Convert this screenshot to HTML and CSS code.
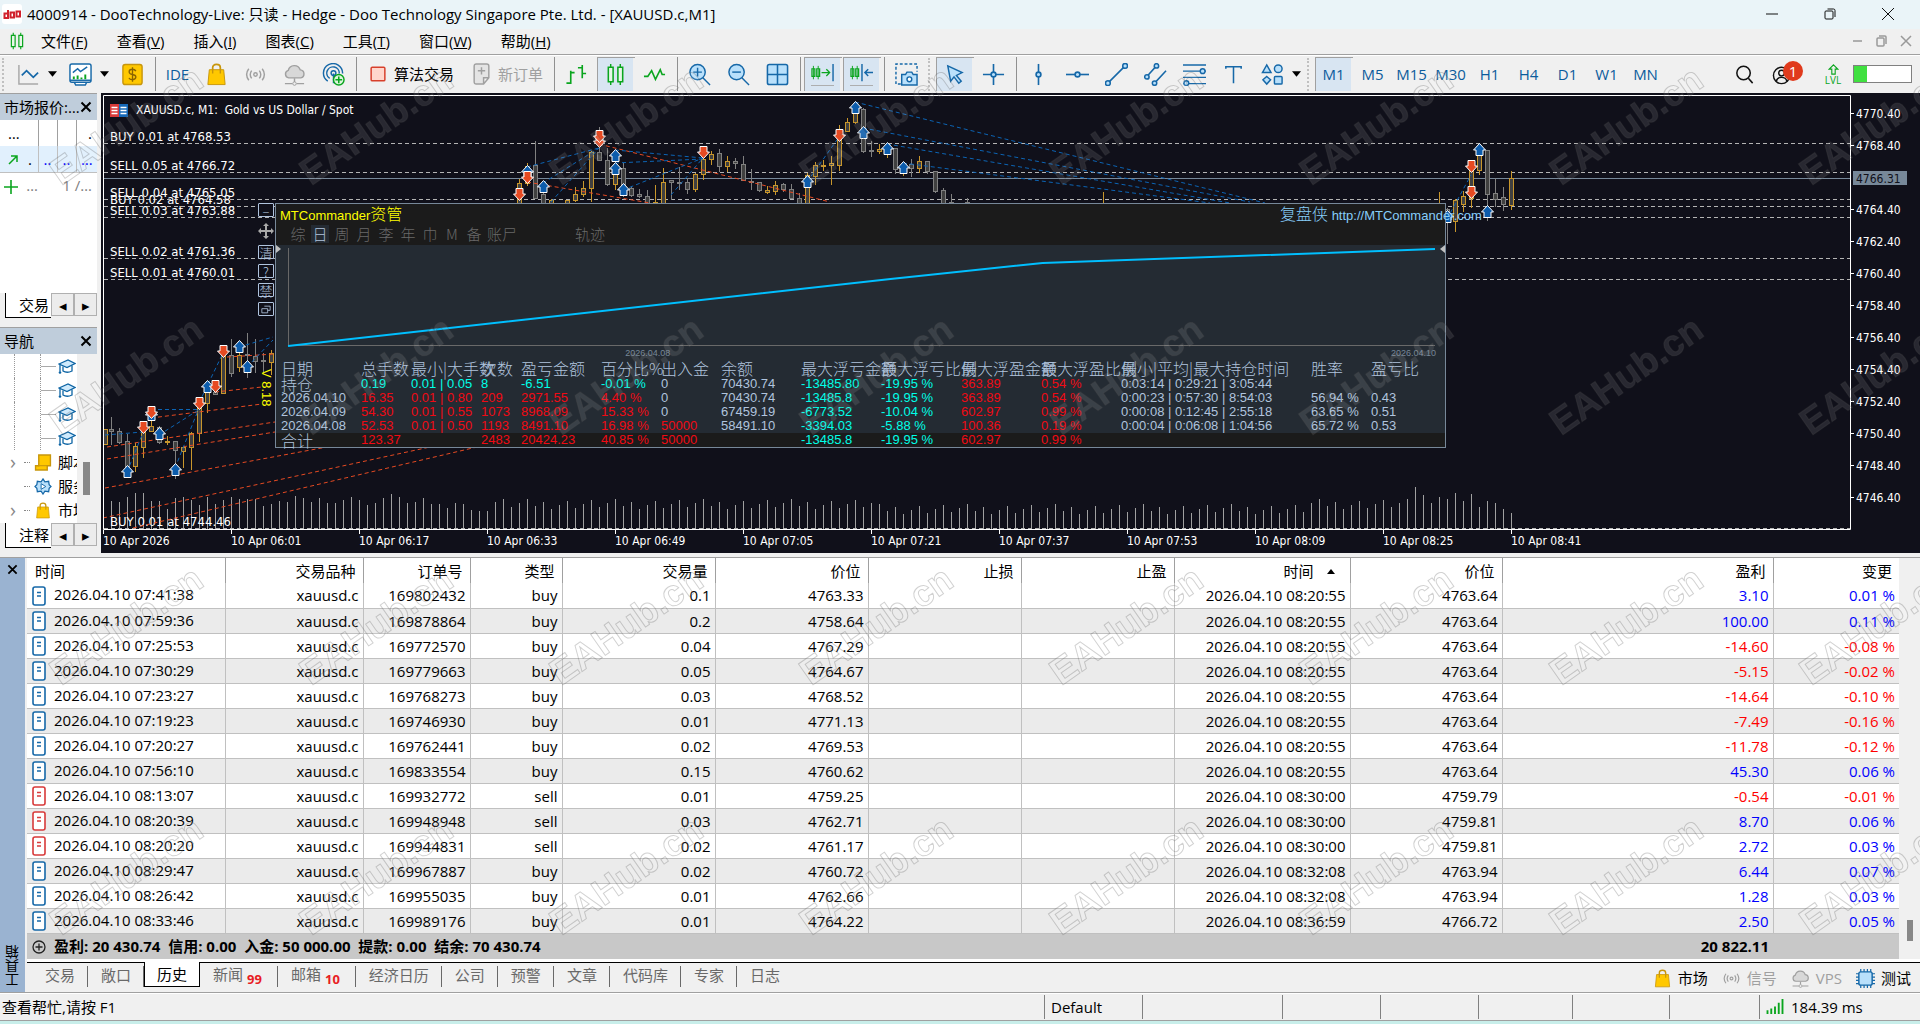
FILE: index.html
```html
<!DOCTYPE html>
<html lang="zh-CN">
<head>
<meta charset="utf-8">
<title>4000914 - DooTechnology-Live</title>
<link rel="stylesheet" href="styles.css">
</head>
<body>
<svg class="defs" aria-hidden="true">
  <symbol id="doc" viewBox="0 0 14 20"><rect x="1" y="1" width="12" height="18" rx="2" fill="#fff" stroke="currentColor" stroke-width="1.6"/><path d="M5 6.500h4M5 10h4" stroke="currentColor" stroke-width="1.400"/></symbol>
  <symbol id="bag" viewBox="0 0 20 24"><path d="M6 8V5q0-3.500 4-3.500T14 5v3" fill="none" stroke="#c8960c" stroke-width="1.800"/><path d="M2.500 7h15l1.500 15.500H1z" fill="#ffc800" stroke="#c8960c"/><path d="M6 7v4M14 7v4" stroke="#c8960c" stroke-width="1.500"/></symbol>
  <symbol id="signal" viewBox="0 0 24 24"><g fill="none" stroke="currentColor" stroke-width="1.500"><circle cx="12" cy="12" r="1.800"/><path d="M8 8q-3 4 0 8M16 8q3 4 0 8M5 6q-4.500 6 0 12M19 6q4.500 6 0 12"/></g></symbol>
  <symbol id="cloud" viewBox="0 0 24 24"><path d="M6 15.500a4 4 0 0 1-.5-7.800 6.500 6.500 0 0 1 12.500-.5 4.200 4.200 0 0 1 .5 8.300z" fill="#d8d8d8" stroke="currentColor" stroke-width="1.500"/><path d="M12 16v4M2 21.500h8M14 21.500h8" stroke="currentColor" stroke-width="1.500"/><circle cx="12" cy="21.500" r="1.800" fill="#f0f0f0" stroke="currentColor"/></symbol>
  <symbol id="caret" viewBox="0 0 8 5"><path d="M0 0h8L4 5z"/></symbol>
  <symbol id="close" viewBox="0 0 12 12"><path d="M1.500 1.500l9 9M10.500 1.500l-9 9" stroke="currentColor" stroke-width="2"/></symbol>
  <symbol id="cap" viewBox="0 0 18 16"><path d="M1 5.500L10 1.500l7 3.500-8 4z" fill="#cfeafc" stroke="#0c64a4" stroke-width="1.300"/><path d="M5 8v4.500q4 2.500 9 0V7M2 6v7" fill="none" stroke="#0c64a4" stroke-width="1.300"/><circle cx="2" cy="14" r="1.300" fill="#0c64a4"/></symbol>
  <symbol id="candles" viewBox="0 0 24 24"><path d="M7 1v22M17 1v22" stroke="#0aa51e" stroke-width="1.500"/><path d="M4.500 4.500h5v15h-5zM14.500 4.500h5v15h-5z" fill="#e8f6e8" stroke="#0aa51e" stroke-width="1.600"/></symbol>
</svg>

<header class="titlebar">
  <svg class="logo" viewBox="0 0 20 20"><rect width="20" height="20" rx="3" fill="#fff"/><g fill="none" stroke="#d0202c" stroke-width="2"><path d="M6 6v8M2.500 9.500H6v4.500H2.500zM8.500 8.500h3.500v5H8.500zM14.500 7.500h3.500v5h-3.500z"/></g></svg>
  <h1>4000914 - DooTechnology-Live: 只读 - Hedge - Doo Technology Singapore Pte. Ltd. - [XAUUSD.c,M1]</h1>
  <div class="window-buttons">
    <button aria-label="最小化"><svg viewBox="0 0 12 12"><path d="M0 6h12"/></svg></button>
    <button aria-label="还原"><svg viewBox="0 0 12 12"><rect x="1" y="3" width="8" height="8" rx="1"/><path d="M3.500 1h6q1.500 0 1.500 1.500V9"/></svg></button>
    <button aria-label="关闭"><svg viewBox="0 0 12 12"><path d="M0 0l12 12M12 0L0 12"/></svg></button>
  </div>
</header>

<nav class="menubar">
  <svg class="menu-logo"><use href="#candles"/></svg>
  <button>文件(<u>F</u>)</button><button>查看(<u>V</u>)</button><button>插入(<u>I</u>)</button><button>图表(<u>C</u>)</button><button>工具(<u>T</u>)</button><button>窗口(<u>W</u>)</button><button>帮助(<u>H</u>)</button>
  <div class="child-buttons">
    <button aria-label="最小化图表"><svg viewBox="0 0 12 12"><path d="M1 6h9"/></svg></button>
    <button aria-label="还原图表"><svg viewBox="0 0 12 12"><rect x="1" y="3" width="7" height="8" rx="1"/><path d="M3 1h6q1 0 1 1v7"/></svg></button>
    <button aria-label="关闭图表"><svg viewBox="0 0 12 12"><path d="M1 1l10 10M11 1L1 11"/></svg></button>
  </div>
</nav>

<div class="toolbar">
  <i class="grip"></i>
  <button class="tool" aria-label="图表类型"><svg viewBox="0 0 24 24"><path d="M2 2v20h20" fill="none" stroke="#a8a8a8" stroke-width="1.500"/><path d="M5 13l5-5 7 7 5-5" fill="none" stroke="#1668a8" stroke-width="1.800"/></svg></button>
  <button class="caret" aria-label="更多图表"><svg><use href="#caret"/></svg></button>
  <button class="tool" aria-label="模板"><svg viewBox="0 0 24 24"><g fill="#fff" stroke="#1668a8" stroke-width="1.500"><path d="M5 19h14l-2 4H7z"/><rect x="1" y="1" width="22" height="19" rx="2"/><path d="M4 10l5-4 3 3 7-5" fill="none"/><path d="M1 18h22" /></g><path d="M5 17v-3M9 17v-4M13 17v-2M17 17v-5" stroke="#0aa51e" stroke-width="2"/></svg></button>
  <button class="caret" aria-label="更多模板"><svg><use href="#caret"/></svg></button>
  <button class="tool" aria-label="报价"><svg viewBox="0 0 24 24"><rect x="2" y="1.500" width="20" height="21" rx="2.500" fill="#ffc800" stroke="#c8960c" stroke-width="1.500"/><path d="M15.500 8.500q-1-2-3.500-2-3.500 0-3.500 2.500T12 12t3.500 2.700T12 17.500q-3 0-3.700-2M12 4.500v15" fill="none" stroke="#8a6400" stroke-width="1.400"/></svg></button>
  <i class="sep"></i>
  <button class="tool ide">IDE</button>
  <button class="tool" aria-label="市场"><svg><use href="#bag"/></svg></button>
  <button class="tool dim" aria-label="信号"><svg><use href="#signal"/></svg></button>
  <button class="tool dim" aria-label="VPS"><svg><use href="#cloud"/></svg></button>
  <button class="tool" aria-label="社区"><svg viewBox="0 0 24 24"><g fill="none" stroke="#1668a8" stroke-width="1.500"><path d="M6 19A10 10 0 1 1 21.500 11M8 16a6.500 6.500 0 1 1 10-5M12 11v10"/><circle cx="12" cy="10.500" r="2.500"/></g><circle cx="17.500" cy="17.500" r="5.500" fill="#dcf5dc" stroke="#0aa51e" stroke-width="1.500"/><path d="M17.500 14v7M14 17.500h7" stroke="#0aa51e" stroke-width="1.600"/></svg></button>
  <i class="sep"></i>
  <button class="order"><svg class="algo" viewBox="0 0 14 14"><rect x="1" y="1" width="12" height="12" rx="1" fill="#ffd6cc" stroke="#d8402c" stroke-width="1.300"/></svg>算法交易</button>
  <button class="order dim"><svg class="sheet" viewBox="0 0 16 21"><path d="M3 1h10q2 0 2 2v11l-5 6H3q-2 0-2-2V3q0-2 2-2zM15 14h-5v6" fill="#e4e4e4" stroke="currentColor" stroke-width="1.400"/><path d="M8 4v7M4.500 7.500h7" stroke="currentColor" stroke-width="1.400"/></svg>新订单</button>
  <i class="sep"></i>
  <button class="tool" aria-label="柱状图"><svg viewBox="0 0 24 24"><path d="M6 8v14M1.500 21H6M6 10h4M18 2v14M13.500 5H18M18 11h4" fill="none" stroke="#0aa51e" stroke-width="1.700"/></svg></button>
  <button class="tool on" aria-label="蜡烛图"><svg><use href="#candles"/></svg></button>
  <button class="tool" aria-label="折线图"><svg viewBox="0 0 24 24"><path d="M1 14h4l4-6 4 9 5-10 2 5h3" fill="none" stroke="#0aa51e" stroke-width="1.700"/></svg></button>
  <i class="sep"></i>
  <button class="tool" aria-label="放大"><svg viewBox="0 0 24 24"><g fill="#b9e0fb" stroke="#1668a8" stroke-width="1.500"><path d="M15.500 15.500L23 23"/><circle cx="10" cy="9.500" r="8"/><path d="M5.500 9.500h9M10 5v9"/></g></svg></button>
  <button class="tool" aria-label="缩小"><svg viewBox="0 0 24 24"><g fill="#b9e0fb" stroke="#1668a8" stroke-width="1.500"><path d="M15.500 15.500L23 23"/><circle cx="10" cy="9.500" r="8"/><path d="M5.500 9.500h9"/></g></svg></button>
  <button class="tool" aria-label="平铺"><svg viewBox="0 0 24 24"><g fill="#b9e0fb" stroke="#1668a8" stroke-width="1.600"><rect x="1.500" y="1.500" width="21" height="21" rx="2"/><path d="M1.500 12h21M12 1.500v21"/></g></svg></button>
  <i class="sep"></i>
  <button class="tool on" aria-label="自动滚动"><svg viewBox="0 0 24 24"><path d="M2.500 3v14M7.500 3v14" stroke="#0aa51e"/><path d="M1 6h3v8H1zM6 6h3v8H6zM11 10h8M16 6.500l3.500 3.500-3.500 3.500" fill="none" stroke="#0aa51e" stroke-width="1.300"/><path d="M23 1v18" stroke="#1668a8" stroke-width="1.500"/><path d="M0 23.500h24" stroke="#aaa"/></svg></button>
  <button class="tool on" aria-label="图表平移"><svg viewBox="0 0 24 24"><path d="M2.500 3v14M7.500 3v14" stroke="#0aa51e"/><path d="M1 6h3v8H1zM6 6h3v8H6z" fill="none" stroke="#0aa51e" stroke-width="1.300"/><path d="M12.500 1v18M24 10h-8M19 6.500L15.500 10l3.500 3.500" fill="none" stroke="#1668a8" stroke-width="1.500"/><path d="M0 23.500h24" stroke="#aaa"/></svg></button>
  <i class="sep"></i>
  <button class="tool" aria-label="截图"><svg viewBox="0 0 24 24"><path d="M6 22H1V1h22v8" fill="none" stroke="#1668a8" stroke-width="1.500" stroke-dasharray="3 2"/><path d="M8 12h3l1.500-2.500h5L19 12h4v11H7V12z" fill="#b9e0fb" stroke="#1668a8" stroke-width="1.500"/><circle cx="15" cy="17" r="2.500" fill="#fff" stroke="#1668a8" stroke-width="1.500"/></svg></button>
  <i class="grip"></i>
  <button class="tool on" aria-label="光标"><svg viewBox="0 0 24 24"><path d="M5 3l15 7-6 3 5 6-2.500 2-5-6.500L8 19z" fill="#b9e0fb" stroke="#1668a8" stroke-width="1.500"/></svg></button>
  <button class="tool" aria-label="十字线"><svg viewBox="0 0 24 24"><g fill="#b9e0fb" stroke="#1668a8" stroke-width="1.700"><path d="M12 1v22M1 12h22"/><circle cx="12" cy="12" r="2.500"/></g></svg></button>
  <i class="sep"></i>
  <button class="tool" aria-label="垂直线"><svg viewBox="0 0 24 24"><g fill="#b9e0fb" stroke="#1668a8" stroke-width="1.700"><path d="M12 1v22"/><circle cx="12" cy="12" r="2.500"/></g></svg></button>
  <button class="tool" aria-label="水平线"><svg viewBox="0 0 24 24"><g fill="#b9e0fb" stroke="#1668a8" stroke-width="1.700"><path d="M0 12h24"/><circle cx="12" cy="12" r="2.500"/></g></svg></button>
  <button class="tool" aria-label="趋势线"><svg viewBox="0 0 24 24"><g fill="#b9e0fb" stroke="#1668a8" stroke-width="1.600"><path d="M3 21L21 3"/><circle cx="3" cy="21" r="2.500"/><circle cx="21" cy="3" r="2.500"/></g></svg></button>
  <button class="tool" aria-label="通道"><svg viewBox="0 0 24 24"><g fill="#b9e0fb" stroke="#1668a8" stroke-width="1.600"><path d="M3 14L13 3M11 21L23 8"/><circle cx="3" cy="14.500" r="2.300"/><circle cx="13" cy="3" r="2.300"/><circle cx="11" cy="21" r="2.300"/></g></svg></button>
  <button class="tool" aria-label="斐波那契"><svg viewBox="0 0 24 24"><g fill="#b9e0fb" stroke="#1668a8" stroke-width="1.500"><path d="M0 2h24M0 8.500h24M0 15h24M0 21.500h24"/><circle cx="20.500" cy="8.500" r="2.500"/><circle cx="3.500" cy="21" r="2.500"/></g></svg></button>
  <button class="tool" aria-label="文字"><svg viewBox="0 0 24 24"><path d="M4 6V4h16v2M12 4v17" fill="none" stroke="#1668a8" stroke-width="1.600"/></svg></button>
  <button class="tool" aria-label="图形"><svg viewBox="0 0 24 24"><g fill="#b9e0fb" stroke="#1668a8" stroke-width="1.500"><path d="M1.500 10L6 2l4.500 8zM6 14l4 3.500L6 22l-4-4.500z"/><circle cx="18" cy="6" r="4"/><rect x="14" y="14" width="8" height="8" rx="1"/></g></svg></button>
  <button class="caret" aria-label="更多图形"><svg><use href="#caret"/></svg></button>
  <i class="grip"></i>
  <button class="tool period on">M1</button><button class="tool period">M5</button><button class="tool period">M15</button><button class="tool period">M30</button><button class="tool period">H1</button><button class="tool period">H4</button><button class="tool period">D1</button><button class="tool period">W1</button><button class="tool period">MN</button>
  <div class="account">
    <button class="tool" aria-label="搜索"><svg viewBox="0 0 24 24"><g fill="none" stroke="#111" stroke-width="1.600"><circle cx="11" cy="10.500" r="7"/><path d="M16 16l4.500 5"/></g></svg></button>
    <button class="tool user" aria-label="通知"><svg viewBox="0 0 24 24"><g fill="none" stroke="#111" stroke-width="1.500"><circle cx="10" cy="13" r="8.500"/><circle cx="10" cy="10.500" r="3"/><path d="M4.500 19q1-4 5.500-4t5.500 4"/></g></svg><b class="badge">1</b></button>
    <span class="lvl"><svg viewBox="0 0 12 13"><path d="M6 1l5 5H8v6H4V6H1z" fill="none" stroke="#0aa51e" stroke-width="1.300"/></svg>LVL</span>
    <span class="meter"><i></i></span>
  </div>
</div>

<main class="workspace">
  <aside class="dock">
    <section class="panel">
      <h2>市场报价:…<button aria-label="关闭"><svg><use href="#close"/></svg></button></h2>
      <table class="quotes">
        <colgroup><col class="q1"><col class="q2"><col class="q2"><col></colgroup>
        <tr><th>…</th><th></th><th></th><th>.</th></tr>
        <tr class="selected"><td><svg class="up" viewBox="0 0 10 10"><path d="M1 9l8-8M3 1h6v6" fill="none" stroke="#0aa51e" stroke-width="1.500"/></svg>.</td><td>..</td><td>..</td><td>…</td></tr>
        <tr class="add"><td><svg class="plus" viewBox="0 0 14 14"><path d="M7 0v14M0 7h14" stroke="#0aa51e" stroke-width="1.600"/></svg>…</td><td colspan="3">1 /…</td></tr>
      </table>
      <div class="dock-tabs"><button class="dock-tab">交易</button><button class="step" aria-label="向左">◂</button><button class="step" aria-label="向右">▸</button></div>
    </section>
    <section class="panel navigator">
      <h2>导航<button aria-label="关闭"><svg><use href="#close"/></svg></button></h2>
      <div class="tree-wrap">
        <ul class="tree">
          <li class="leaf"><svg><use href="#cap"/></svg></li><li class="leaf"><svg><use href="#cap"/></svg></li><li class="leaf"><svg><use href="#cap"/></svg></li><li class="leaf"><svg><use href="#cap"/></svg></li>
          <li><span class="chev">›</span><i class="dots"></i><svg viewBox="0 0 16 16"><path d="M4 1h11v10h-3v4H1v-4h3z" fill="#ffc800" stroke="#c8960c" stroke-width="1.300"/><path d="M3 11h9" stroke="#c8960c"/></svg>脚本</li>
          <li><span class="chev"></span><i class="dots"></i><svg viewBox="0 0 18 18"><path d="M9 1l2 3 4-.5.500 3.500 2 2-2 2-.500 3.500-4-.5-2 3-2-3-4 .5-.500-3.500-2-2 2-2L3 3.500l4 .5z" fill="#b9e0fb" stroke="#1668a8" stroke-width="1.300"/><path d="M7 6l5 3-5 3z" fill="#fff" stroke="#1668a8"/></svg>服务</li>
          <li><span class="chev">›</span><i class="dots"></i><svg><use href="#bag"/></svg>市场</li>
        </ul>
        <div class="tree-scroll"><i></i></div>
      </div>
      <div class="dock-tabs"><button class="dock-tab">注释</button><button class="step" aria-label="向左">◂</button><button class="step" aria-label="向右">▸</button></div>
    </section>
  </aside>

  <section class="chart" aria-label="XAUUSD.c M1">
    <svg id="plot" class="plot"></svg>
    <div class="chart-title"><svg viewBox="0 0 18 13"><path d="M0 0h9v13H0z" fill="#d83a3a"/><path d="M9 0h9v13H9z" fill="#1668b8"/><path d="M1.500 3.500h6M1.500 6.500h6M1.500 9.500h6M10.500 3.500h6M10.500 6.500h6M10.500 9.500h6" stroke="#fff" stroke-width="1.400"/></svg>XAUUSD.c, M1:&nbsp; Gold vs US Dollar / Spot</div>

    <div class="commander-tools">
      <button aria-label="折叠">–</button>
      <button class="move" aria-label="移动"><svg viewBox="0 0 16 16"><path d="M8 0l3 3H9v4h4V5l3 3-3 3V9H9v4h2l-3 3-3-3h2V9H3v2L0 8l3-3v2h4V3H5z" fill="#a9a9a9"/></svg></button>
      <button>清</button><button>?</button><button>禁</button>
      <button aria-label="窗口"><svg viewBox="0 0 12 10"><path d="M4 1h7v5H8M1 4h7v5H1z" fill="none" stroke="#b0c4de"/></svg></button>
      <span class="version">V 8.18</span>
    </div>

    <div class="commander">
      <div class="commander-head">
        <strong>MTCommander<span class="cjk">资管</span></strong>
        <a href="#"><span class="cjk">复盘侠</span> http://MTCommander.com</a>
        <div class="ranges"><button>综</button><button class="current">日</button><button>周</button><button>月</button><button>李</button><button>年</button><button>巾</button><button>M</button><button>备</button><button class="wide">账尸</button><button>轨迹</button></div>
      </div>
      <svg class="equity" viewBox="0 0 1168 116" preserveAspectRatio="none">
        <path d="M12.500 3v98M12 100.500h1146" fill="none" stroke="#696969"/>
        <path d="M12 101L614 34 766 18 1158 4" fill="none" stroke="#00bfff" stroke-width="2"/>
        <path d="M0 0l5 4-5 4zM1168 0l-5 4 5 4z" fill="#c0c0c0"/>
        <text x="349" y="111">2026.04.08</text><text x="1114" y="111">2026.04.10</text>
      </svg>
      <table class="stats">
        <colgroup><col class="w80"><col class="w50"><col class="w70"><col class="w40"><col class="w80"><col class="w60"><col class="w60"><col class="w80"><col class="w80"><col class="w80"><col class="w80"><col class="w80"><col class="w190"><col class="w60"><col></colgroup>
        <thead><tr><th>日期</th><th>总手数</th><th>最小|大手数</th><th>次数</th><th>盈亏金额</th><th>百分比%</th><th>出入金</th><th>余额</th><th>最大浮亏金额</th><th>最大浮亏比例</th><th>最大浮盈金额</th><th>最大浮盈比例</th><th>最小|平均|最大持仓时间</th><th>胜率</th><th>盈亏比</th></tr></thead>
        <tbody>
          <tr><td class="cjk">持仓</td><td class="c">0.19</td><td class="c">0.01 | 0.05</td><td class="c">8</td><td class="c">-6.51</td><td class="c">-0.01 %</td><td>0</td><td>70430.74</td><td class="c">-13485.80</td><td class="c">-19.95 %</td><td class="r">363.89</td><td class="r">0.54 %</td><td>0:03:14 | 0:29:21 | 3:05:44</td><td></td><td></td></tr>
          <tr><td>2026.04.10</td><td class="r">16.35</td><td class="r">0.01 | 0.80</td><td class="r">209</td><td class="r">2971.55</td><td class="r">4.40 %</td><td>0</td><td>70430.74</td><td class="c">-13485.8</td><td class="c">-19.95 %</td><td class="r">363.89</td><td class="r">0.54 %</td><td>0:00:23 | 0:57:30 | 8:54:03</td><td>56.94 %</td><td>0.43</td></tr>
          <tr><td>2026.04.09</td><td class="r">54.30</td><td class="r">0.01 | 0.55</td><td class="r">1073</td><td class="r">8968.09</td><td class="r">15.33 %</td><td>0</td><td>67459.19</td><td class="c">-6773.52</td><td class="c">-10.04 %</td><td class="r">602.97</td><td class="r">0.99 %</td><td>0:00:08 | 0:12:45 | 2:55:18</td><td>63.65 %</td><td>0.51</td></tr>
          <tr><td>2026.04.08</td><td class="r">52.53</td><td class="r">0.01 | 0.50</td><td class="r">1193</td><td class="r">8491.10</td><td class="r">16.98 %</td><td class="r">50000</td><td>58491.10</td><td class="c">-3394.03</td><td class="c">-5.88 %</td><td class="r">100.36</td><td class="r">0.19 %</td><td>0:00:04 | 0:06:08 | 1:04:56</td><td>65.72 %</td><td>0.53</td></tr>
        </tbody>
        <tfoot><tr><td class="cjk">合计</td><td class="r">123.37</td><td></td><td class="r">2483</td><td class="r">20424.23</td><td class="r">40.85 %</td><td class="r">50000</td><td></td><td class="c">-13485.8</td><td class="c">-19.95 %</td><td class="r">602.97</td><td class="r">0.99 %</td><td></td><td></td><td></td></tr></tfoot>
      </table>
    </div>
  </section>
</main>

<section class="toolbox">
  <div class="toolbox-side"><button aria-label="关闭"><svg><use href="#close"/></svg></button><span>工具箱</span></div>
  <div class="toolbox-main">
    <div class="history-wrap">
      <table class="history">
        <colgroup><col class="h198"><col class="h138"><col class="h107"><col class="h92"><col class="h153"><col class="h153"><col class="h153"><col class="h153"><col class="h176"><col class="h152"><col class="h271"><col class="h126"></colgroup>
        <thead><tr><th>时间</th><th>交易品种</th><th>订单号</th><th>类型</th><th>交易量</th><th>价位</th><th>止损</th><th>止盈</th><th>时间<svg class="sort" viewBox="0 0 8 5"><path d="M0 5h8L4 0z"/></svg></th><th>价位</th><th>盈利</th><th>变更</th></tr></thead>
        <tbody>
          <tr><td><svg><use href="#doc"/></svg>2026.04.10 07:41:38</td><td>xauusd.c</td><td>169802432</td><td>buy</td><td>0.1</td><td>4763.33</td><td></td><td></td><td>2026.04.10 08:20:55</td><td>4763.64</td><td>3.10</td><td>0.01 %</td></tr>
          <tr><td><svg><use href="#doc"/></svg>2026.04.10 07:59:36</td><td>xauusd.c</td><td>169878864</td><td>buy</td><td>0.2</td><td>4758.64</td><td></td><td></td><td>2026.04.10 08:20:55</td><td>4763.64</td><td>100.00</td><td>0.11 %</td></tr>
          <tr class="loss"><td><svg><use href="#doc"/></svg>2026.04.10 07:25:53</td><td>xauusd.c</td><td>169772570</td><td>buy</td><td>0.04</td><td>4767.29</td><td></td><td></td><td>2026.04.10 08:20:55</td><td>4763.64</td><td>-14.60</td><td>-0.08 %</td></tr>
          <tr class="loss"><td><svg><use href="#doc"/></svg>2026.04.10 07:30:29</td><td>xauusd.c</td><td>169779663</td><td>buy</td><td>0.05</td><td>4764.67</td><td></td><td></td><td>2026.04.10 08:20:55</td><td>4763.64</td><td>-5.15</td><td>-0.02 %</td></tr>
          <tr class="loss"><td><svg><use href="#doc"/></svg>2026.04.10 07:23:27</td><td>xauusd.c</td><td>169768273</td><td>buy</td><td>0.03</td><td>4768.52</td><td></td><td></td><td>2026.04.10 08:20:55</td><td>4763.64</td><td>-14.64</td><td>-0.10 %</td></tr>
          <tr class="loss"><td><svg><use href="#doc"/></svg>2026.04.10 07:19:23</td><td>xauusd.c</td><td>169746930</td><td>buy</td><td>0.01</td><td>4771.13</td><td></td><td></td><td>2026.04.10 08:20:55</td><td>4763.64</td><td>-7.49</td><td>-0.16 %</td></tr>
          <tr class="loss"><td><svg><use href="#doc"/></svg>2026.04.10 07:20:27</td><td>xauusd.c</td><td>169762441</td><td>buy</td><td>0.02</td><td>4769.53</td><td></td><td></td><td>2026.04.10 08:20:55</td><td>4763.64</td><td>-11.78</td><td>-0.12 %</td></tr>
          <tr><td><svg><use href="#doc"/></svg>2026.04.10 07:56:10</td><td>xauusd.c</td><td>169833554</td><td>buy</td><td>0.15</td><td>4760.62</td><td></td><td></td><td>2026.04.10 08:20:55</td><td>4763.64</td><td>45.30</td><td>0.06 %</td></tr>
          <tr class="sell loss"><td><svg><use href="#doc"/></svg>2026.04.10 08:13:07</td><td>xauusd.c</td><td>169932772</td><td>sell</td><td>0.01</td><td>4759.25</td><td></td><td></td><td>2026.04.10 08:30:00</td><td>4759.79</td><td>-0.54</td><td>-0.01 %</td></tr>
          <tr class="sell"><td><svg><use href="#doc"/></svg>2026.04.10 08:20:39</td><td>xauusd.c</td><td>169948948</td><td>sell</td><td>0.03</td><td>4762.71</td><td></td><td></td><td>2026.04.10 08:30:00</td><td>4759.81</td><td>8.70</td><td>0.06 %</td></tr>
          <tr class="sell"><td><svg><use href="#doc"/></svg>2026.04.10 08:20:20</td><td>xauusd.c</td><td>169944831</td><td>sell</td><td>0.02</td><td>4761.17</td><td></td><td></td><td>2026.04.10 08:30:00</td><td>4759.81</td><td>2.72</td><td>0.03 %</td></tr>
          <tr><td><svg><use href="#doc"/></svg>2026.04.10 08:29:47</td><td>xauusd.c</td><td>169967887</td><td>buy</td><td>0.02</td><td>4760.72</td><td></td><td></td><td>2026.04.10 08:32:08</td><td>4763.94</td><td>6.44</td><td>0.07 %</td></tr>
          <tr><td><svg><use href="#doc"/></svg>2026.04.10 08:26:42</td><td>xauusd.c</td><td>169955035</td><td>buy</td><td>0.01</td><td>4762.66</td><td></td><td></td><td>2026.04.10 08:32:08</td><td>4763.94</td><td>1.28</td><td>0.03 %</td></tr>
          <tr><td><svg><use href="#doc"/></svg>2026.04.10 08:33:46</td><td>xauusd.c</td><td>169989176</td><td>buy</td><td>0.01</td><td>4764.22</td><td></td><td></td><td>2026.04.10 08:36:59</td><td>4766.72</td><td>2.50</td><td>0.05 %</td></tr>
        </tbody>
        <tfoot><tr><td colspan="10"><svg class="circle-plus" viewBox="0 0 14 14"><g fill="none" stroke="#222" stroke-width="1.300"><circle cx="7" cy="7" r="6"/><path d="M7 3.500v7M3.500 7h7"/></g></svg>盈利: 20 430.74&nbsp; 信用: 0.00&nbsp; 入金: 50 000.00&nbsp; 提款: 0.00&nbsp; 结余: 70 430.74</td><td>20 822.11</td><td></td></tr></tfoot>
      </table>
      <div class="history-scroll"><i></i></div>
    </div>
    <div class="tabs">
      <button class="first">交易</button><button>敞口</button><button class="active">历史</button><button>新闻<b>99</b></button><button>邮箱<b>10</b></button><button>经济日历</button><button>公司</button><button>预警</button><button>文章</button><button>代码库</button><button>专家</button><button>日志</button>
      <div class="services">
        <a href="#"><svg><use href="#bag"/></svg>市场</a>
        <a href="#" class="dim"><svg><use href="#signal"/></svg>信号</a>
        <a href="#" class="dim"><svg><use href="#cloud"/></svg>VPS</a>
        <a href="#"><svg viewBox="0 0 20 20"><path d="M5 0v20M8.500 0v20M12 0v20M15.500 0v20M0 5h20M0 8.500h20M0 12h20M0 15.500h20" stroke="#1668a8" stroke-width="1.300"/><rect x="3" y="3" width="14" height="14" rx="2" fill="#b9e0fb" stroke="#1668a8" stroke-width="1.500"/></svg>测试</a>
      </div>
    </div>
  </div>
</section>

<footer class="status">
  <span class="message">查看帮忙,请按 F1</span><span class="s98">Default</span><span class="s140"></span><span class="s98"></span><span class="s98"></span><span class="s94"></span><span class="s97"></span><span class="s90"></span>
  <span class="ping"><svg viewBox="0 0 18 16"><path d="M1 16v-4M5 16v-6M9 16V8M13 16V4M17 16V0" stroke="#0aa51e" stroke-width="2"/></svg>184.39 ms</span>
</footer>
<div class="desktop-edge"></div>

<svg class="watermark" aria-hidden="true">
  <defs><pattern id="mark" x="1" y="0" width="250" height="250" patternUnits="userSpaceOnUse"><text x="125" y="138" transform="rotate(-35 125 125)">EAHub.cn</text></pattern></defs>
  <rect width="100%" height="100%" fill="url(#mark)"/>
</svg>
<script src="chart.js"></script>
</body>
</html>
```
FILE: styles.css
```css
* { box-sizing: border-box; }
body {
  margin: 0;
  min-height: 100vh;
  display: flex;
  flex-direction: column;
  background: #f0f0f0;
  color: #000;
  font: 15px/20px "Open Sans", "Noto Sans CJK SC", sans-serif;
}
button {
  margin: 0;
  padding: 0;
  border: 0;
  background: none;
  color: inherit;
  font: inherit;
  white-space: nowrap;
}
a { color: inherit; text-decoration: none; }
h1, h2 { margin: 0; font-size: 15px; font-weight: 400; }
table { border-collapse: collapse; }
.defs { position: absolute; width: 0; height: 0; }

/* title bar */
.titlebar { height: 29px; display: flex; align-items: center; padding: 0 3px 2px 2px; background: #eaf4f8; }
.logo { width: 20px; height: 20px; margin-right: 5px; }
.window-buttons { margin-left: auto; display: flex; }
.window-buttons button { width: 58px; height: 26px; }
.window-buttons svg { width: 12px; height: 12px; fill: none; stroke: #111; }

/* menu bar */
.menubar { height: 25px; display: flex; align-items: center; gap: 29px; padding: 0 0 2px 8px; }
.menu-logo { width: 18px; height: 18px; margin-right: -14px; }
.child-buttons { margin-left: auto; display: flex; padding-right: 2px; }
.child-buttons button { width: 24px; }
.child-buttons svg { width: 12px; height: 12px; fill: none; stroke: #999; stroke-width: 1.5; }

/* toolbar */
.toolbar { height: 39px; display: flex; align-items: center; border-top: 1px solid #a0a0a0; box-shadow: inset 0 1px #fff; }
.grip { width: 9px; height: 33px; border-left: 2px dotted #c0c0c0; margin-left: 2px; margin-right: -2px; flex: none; }
.sep { width: 6px; height: 34px; flex: none; background: linear-gradient(#909090, #909090) 3px 0 / 1px 100% no-repeat; }
.tool { width: 39px; height: 34px; flex: none; display: flex; align-items: center; justify-content: center; position: relative; color: #0c5c9c; }
.tool svg { width: 23px; height: 23px; }
.tool.dim, .dim { color: #a0a0a0; }
.tool.on { background: linear-gradient(#d8e5f2, #d8e5f2) 1px 0 / 36px 100% no-repeat; box-shadow: inset 1px 0 #f0f0f0, inset 2px 1px #a0a0a0; }
.caret { width: 13px; height: 34px; flex: none; display: flex; align-items: center; }
.caret svg { width: 9px; height: 6px; }
.order { height: 34px; flex: none; display: flex; align-items: center; gap: 8px; padding: 0 8px 0 11px; }
.algo { width: 16px; height: 16px; }
.sheet { width: 17px; height: 22px; }
.account { margin-left: auto; display: flex; align-items: center; padding-right: 8px; }
.badge { position: absolute; left: 19px; top: 4px; width: 20px; height: 20px; border-radius: 50%; background: #e03a1c; color: #fff; font-weight: 400; text-align: center; }
.lvl { width: 50px; padding-left: 10px; display: flex; flex-direction: column; align-items: center; color: #0aa51e; font-size: 10px; line-height: 10px; }
.lvl svg { width: 11px; height: 11px; }
.meter { width: 59px; height: 18px; border: 1px solid #808080; background: #fff; display: block; }
.meter i { display: block; width: 13px; height: 16px; background: #40e040; }

/* workspace */
.workspace { flex: 1 0 464px; display: flex; padding-bottom: 4px; }
.dock { width: 97px; margin-right: 4px; display: flex; flex-direction: column; gap: 9px; flex: none; }
.panel { display: flex; flex-direction: column; height: 225px; background: #f0f0f0; }
.navigator { height: auto; flex: 1; margin-bottom: 5px; }
.panel h2 { height: 27px; flex: none; display: flex; align-items: center; justify-content: space-between; padding: 0 5px 0 4px; background: #bfcddb; border-top: 1px solid #a0a0a0; white-space: nowrap; }
.panel h2 svg { width: 12px; height: 12px; display: block; }
.quotes { width: 97px; table-layout: fixed; background: #fff; }
.quotes .q1 { width: 38px; }
.quotes .q2 { width: 19px; }
.quotes th, .quotes td { height: 26px; padding: 0 5px 0 8px; font-weight: 400; text-align: left; line-height: 24px; white-space: nowrap; }
.quotes th + th { border-left: 1px solid #a0a0a0; text-align: right; padding-left: 0; }
.selected td { background: #e1f0fd; color: #00f; border-bottom: 1px solid #c0c0c0; padding: 0 5px 0 8px; }
.selected td + td { padding: 0; text-align: center; border-left: 1px solid #c0c0c0; }
.selected td:first-child { color: #000; }
.quotes .add td { color: #808080; text-align: right; padding: 0 5px 0 0; }
.quotes .add td:first-child { padding-right: 0; }
.up { width: 10px; height: 10px; margin-right: 10px; }
.plus { width: 14px; height: 14px; margin-right: 8px; vertical-align: middle; }
.dock-tabs { margin-top: auto; height: 25px; display: flex; align-items: flex-start; padding-left: 5px; flex: none; }
.dock-tab { width: 46px; height: 25px; border-left: 1px solid #000; border-bottom: 1px solid #000; background: #fff; padding-left: 11px; }
.step { width: 23px; height: 23px; border: 1px solid #b0b0b0; background: #ececec; line-height: 18px; }
.panel:first-child { background: linear-gradient(#fff, #fff) 0 0 / 100% 200px no-repeat; }
.tree-wrap { flex: 1; display: flex; min-height: 0; background: #fff; }
.tree { list-style: none; margin: 0; padding: 0; width: 77px; overflow: hidden; flex: none; }
.tree li { height: 24px; display: flex; align-items: center; white-space: nowrap; padding-left: 10px; gap: 2px; }
.tree svg { width: 18px; height: 17px; margin-right: 4px; flex: none; }
.tree .leaf { margin-left: 14px; padding-left: 0; border-left: 1px dotted #999; }
.leaf::before { content: ""; width: 15px; height: 24px; margin-left: 25px; background: linear-gradient(#aaa, #aaa) 0 12px / 100% 1px no-repeat; border-left: 1px dotted #999; flex: none; }
.chev { width: 12px; font-size: 20px; line-height: 18px; color: #888; flex: none; }
.dots { width: 6px; margin-right: 2px; border-top: 1px dotted #888; flex: none; }
.tree-scroll { width: 20px; background: #f0f0f0; padding: 108px 7px 0 6px; }
.tree-scroll i { display: block; height: 33px; background: #888; }

/* chart */
.chart { flex: 1; position: relative; background: #10101a; overflow: hidden; min-width: 0; }
.plot { position: absolute; inset: 0; width: 100%; height: 100%; }
.plot text { font: 12px "DejaVu Sans Condensed", "DejaVu Sans", sans-serif; fill: #fff; }
.plot .order-label { font-size: 13px; }
.chart-title { position: absolute; left: 9px; top: 8px; display: flex; align-items: center; gap: 8px; color: #fff; font: 12px/18px "DejaVu Sans Condensed", "DejaVu Sans", sans-serif; }
.chart-title svg { width: 18px; height: 13px; }
.commander-tools { position: absolute; left: 157px; top: 110px; width: 16px; display: flex; flex-direction: column; gap: 5px; }
.commander-tools button { width: 16px; height: 14px; border: 1px solid #b0c4de; border-radius: 1px; background: #10101a; color: #b0c4de; font: 300 13px/11px "Noto Sans CJK SC", sans-serif; display: flex; align-items: center; justify-content: center; }
.commander-tools .move { border: 0; height: 18px; }
.commander-tools svg { width: 10px; height: 9px; }
.commander-tools .move svg { width: 16px; height: 16px; }
.version { color: #ff0; font: 13px/16px "Liberation Sans", sans-serif; writing-mode: vertical-rl; margin-top: 48px; }
.commander { position: absolute; left: 174px; top: 110px; width: 1171px; border: 1px solid #778899; background: #242b33; color: #b0c4de; font: 13px/14px "Liberation Sans", "Noto Sans CJK SC", sans-serif; }
.cjk { font: 300 16px/14px "Noto Sans CJK SC", sans-serif; }
.commander-head { height: 41px; background: #1b1b1b; display: grid; grid-template-columns: 1fr 165px; grid-template-rows: 20px 20px; white-space: nowrap; align-items: center; padding-left: 4px; }
.commander-head strong { color: #ff0; font-weight: 400; }
.commander-head a { color: #87cefa; }
.ranges { grid-column: 1 / 3; display: flex; padding-left: 9px; }
.ranges button { width: 18px; height: 18px; margin-right: 4px; color: #696969; font: 300 15px/18px "Noto Sans CJK SC", sans-serif; }
.ranges .current { background: #242b33; color: #b0c4de; }
.ranges .wide { width: 84px; text-align: left; }
.equity { display: block; width: 100%; height: 116px; }
.equity text { font: 9px "Liberation Sans", sans-serif; fill: #778899; }
.stats { width: 100%; table-layout: fixed; }
.stats th, .stats td { padding: 0; height: 14px; font-weight: 400; text-align: left; white-space: nowrap; }
.stats th { font: 300 16px/14px "Noto Sans CJK SC", sans-serif; height: 16px; vertical-align: top; }
.stats th:first-child, .stats td:first-child { padding-left: 5px; }
.stats .cjk { font-weight: 300; }
.stats tfoot { background: #1b1b1b; }
.c { color: #00ffe8; }
.r { color: #f00a14; }
.w40 { width: 40px; } .w50 { width: 50px; } .w60 { width: 60px; } .w70 { width: 70px; } .w80 { width: 80px; } .w190 { width: 190px; }
.stats col:first-child { width: 85px; }

/* toolbox */
.toolbox { display: flex; border-top: 1px solid #a0a0a0; }
.toolbox-side { width: 25px; background: #9ab3d1; display: flex; flex-direction: column; align-items: center; justify-content: space-between; padding: 6px 0 5px; flex: none; }
.toolbox-side svg { width: 11px; height: 11px; display: block; }
.toolbox-side span { writing-mode: vertical-rl; transform: rotate(180deg); font-size: 14px; }
.toolbox-main { flex: 1; padding-left: 2px; min-width: 0; }
.history-wrap { display: flex; background: #fff; padding-bottom: 3px; }
.history { flex: 1; table-layout: fixed; width: 100%; }
.history th, .history td { padding: 0 4px 0 0; height: 25px; text-align: right; white-space: nowrap; font-weight: 400; border-right: 1px solid #c0c0c0; }
.history th { padding-right: 7px; border-color: #a0a0a0; }
.history th:first-child { text-align: left; padding-left: 8px; }
.history th:last-child, .history td:last-child { border-right: 0; }
.history td { border-bottom: 1px solid #c0c0c0; }
.history td:first-child { text-align: left; padding-left: 5px; }
.history td svg { width: 14px; height: 20px; vertical-align: middle; margin-right: 8px; color: #1668a8; }
.history .sell svg { color: #d83a3a; }
.history tbody tr:nth-child(even) { background: #ebebeb; }
.history tbody td:nth-child(n+11) { color: #00f; }
.history .loss td:nth-child(n+11) { color: #f00; }
.sort { width: 8px; height: 5px; margin: 0 8px 3px 13px; }
.history tfoot td { height: 26px; background: #c8c8c8; font-weight: 700; border: 0; }
.history td .circle-plus { height: 14px; vertical-align: -2px; }
.h92 { width: 92px; } .h107 { width: 107px; } .h126 { width: 126px; } .h138 { width: 138px; } .h152 { width: 152px; } .h153 { width: 153px; } .h176 { width: 176px; } .h198 { width: 198px; } .h271 { width: 271px; }
.history-scroll { width: 21px; flex: none; background: #f0f0f0; display: flex; flex-direction: column; justify-content: flex-end; padding: 0 8px 18px; }
.history-scroll i { height: 21px; width: 6px; background: #888; }
.tabs { height: 30px; display: flex; align-items: flex-start; border-top: 1px solid #000; color: #696969; padding-left: 5px; }
.tabs > button { height: 24px; padding: 0 13px; position: relative; }
.tabs > button::after { content: ""; position: absolute; right: 0; top: 3px; height: 21px; border-right: 1px solid #696969; }
.tabs > button:last-of-type::after { display: none; }
.tabs .active { background: #fff; color: #000; border: solid #000; border-width: 0 1px 1px; padding: 0 12px; margin-top: -1px; height: 25px; }
.tabs .active::after { display: none; }
.tabs b { color: #e81c24; font-size: 13px; margin: 0 3px 0 4px; vertical-align: -4px; line-height: 16px; }
.services { margin-left: auto; display: flex; gap: 14px; padding: 5px 9px 0 0; color: #000; }
.services a { display: flex; align-items: center; gap: 6px; }
.services .dim { color: #a0a0a0; }
.services svg { width: 19px; height: 19px; }

/* status bar */
.status { height: 28px; display: flex; align-items: center; border-top: 1px solid #a0a0a0; box-shadow: inset 0 1px #fff; }
.status span { height: 24px; line-height: 24px; border-left: 1px solid #808080; padding-left: 6px; flex: none; }
.status .message { flex: 1; border: 0; padding-left: 2px; }
.s90 { width: 90px; } .s94 { width: 94px; } .s97 { width: 97px; } .s98 { width: 98px; } .s140 { width: 140px; }
.ping { width: 161px; display: flex; align-items: center; gap: 7px; }
.ping svg { width: 18px; height: 15px; }
.desktop-edge { height: 4px; background: #c8eeea; border-top: 1px solid #a0a0a0; }

.watermark { position: absolute; left: 0; top: 0; width: 100%; height: 100%; pointer-events: none; }
.watermark text { font: 700 37px "Liberation Sans", sans-serif; text-anchor: middle; fill: rgba(255, 255, 255, 0.1); stroke: rgba(70, 70, 70, 0.25); stroke-width: 1px; }
```
FILE: chart.js
```js
// Draws the candles, orders, deals and both axes of the price chart.
const plot = document.getElementById('plot');
const NS = 'http://www.w3.org/2000/svg';
const OX = 101, OY = 93;
const W = plot.clientWidth;
const axisX = W - 70 + OX;
const root = add(plot, 'g', { transform: `translate(${-OX} ${-OY})` });

function add(parent, tag, attrs, text) {
  const el = document.createElementNS(NS, tag);
  for (const k in attrs) el.setAttribute(k, attrs[k]);
  if (text) el.textContent = text;
  parent.appendChild(el);
  return el;
}
const line = (x1, y1, x2, y2, stroke, dash) =>
  add(root, 'line', { x1, y1, x2, y2, stroke, 'stroke-dasharray': dash || 'none', 'shape-rendering': dash && y1 !== y2 ? 'auto' : 'crispEdges' });
const yOf = p => Math.round(113 + (4770.4 - p) * 16) + 0.5;

// tick volume
const vol = [28,27,32,36,36,28,28,20,31,32,29,24,32,25,29,32,30,30,30,23,25,28,27,33,31,27,31,26,26,29,32,29,24,26,31,35,32,26,27,31,25,25,21,26,25,19,18,18,27,30];
const lateVol = [42,34,26,32,30,36,28,35,22,28,26,20,16];
for (let i = 0; i < 176; i++) {
  const x = 111 + i * 8;
  let h = vol[i] || 20 + (i * 37 % 11) - (i > 95 && i < 150 ? 5 : 0);
  if (i >= 163) h = lateVol[i - 163];
  line(x + 0.5, 529 - h, x + 0.5, 529, '#a0a0a0');
}

// orders
[['BUY 0.01', 4768.53], ['SELL 0.05', 4766.72], ['SELL 0.04', 4765.05], ['BUY 0.02', 4764.58], ['SELL 0.03', 4763.88], ['SELL 0.02', 4761.36], ['SELL 0.01', 4760.01], ['BUY 0.01', 4744.46]].forEach(([t, p]) => {
  line(104, yOf(p), axisX, yOf(p), '#b4b4b4', '4 3');
  add(root, 'text', { x: 110, y: yOf(p) - 2.5, class: 'order-label' }, `${t} at ${p.toFixed(2)}`);
});
line(104, 178.5, axisX, 178.5, '#778899');

// x, high, low, body top, body bottom, rising
const bars = [
[105,429,445,429,444,1],[111,417,445,429,431,0],[119,428,444,431,442,0],[127,434,478,441,466,0],[135,443,472,446,466,1],[143,430,458,432,447,1],[151,420,432,426,431,1],[159,426,444,427,442,0],[167,436,445,441,442,1],[175,441,479,441,450,0],[183,446,468,447,451,1],[191,432,470,433,447,1],[199,405,442,407,433,1],[207,390,413,392,403,1],[215,385,394,392,394,0],[223,355,394,356,393,1],[231,339,377,355,373,0],[239,353,372,355,367,1],[247,333,378,354,355,0],[255,339,373,356,361,0],[263,353,373,360,361,0],[271,350,375,353,362,1],
[519,179,203,183,203,1],[527,163,186,166,183,1],[535,141,198,165,198,0],[543,190,203,194,203,0],[551,199,203,200,203,1],[567,200,203,200,203,1],[575,187,202,194,200,1],[583,181,197,188,194,1],[591,151,202,152,188,1],[599,127,160,152,160,0],[607,148,186,160,184,0],[615,165,190,170,184,1],[623,163,197,168,195,0],[631,186,197,188,195,0],[639,189,198,194,196,0],[647,190,203,196,203,0],[655,185,203,202,203,1],[663,168,203,182,203,1],[671,180,200,180,182,0],[679,167,190,182,183,0],[687,178,194,182,189,0],[695,173,192,174,189,1],[703,157,180,159,174,1],[711,151,165,154,159,1],[719,149,172,153,166,0],[727,156,172,161,166,1],[735,158,169,161,163,0],[743,156,181,164,180,0],[751,169,190,181,182,0],[759,182,192,182,190,0],[767,186,194,190,192,1],[775,181,195,185,191,1],[783,183,192,184,189,0],[791,184,199,189,198,0],[799,193,203,198,203,0],[807,173,203,175,203,1],[815,162,185,165,176,1],[823,160,171,165,166,1],[831,156,185,163,165,1],[839,125,171,129,165,1],[847,118,131,122,131,1],[855,110,124,112,122,1],[863,108,153,109,151,0],[871,141,157,150,151,0],[879,144,154,149,151,1],[887,145,158,148,153,1],[895,148,174,148,169,0],[903,167,176,168,173,1],[911,159,177,164,168,0],[919,156,173,161,168,1],[927,161,174,161,171,0],[935,171,193,171,191,0],[943,188,203,190,203,0],[951,194,203,202,203,0],[967,198,203,202,203,0],[1103,192,203,203,203,1],
[1439,192,203,203,203,1],[1447,208,244,209,222,0],[1455,199,232,200,221,1],[1463,191,212,196,204,1],[1471,168,208,170,198,1],[1479,145,175,150,170,1],[1487,150,221,150,194,0],[1495,178,207,193,199,0],[1503,187,211,197,204,0],[1511,171,210,178,205,1]];
bars.forEach(([x, hi, lo, top, bot, up]) => {
  const c = up ? '#c8962c' : '#808080';
  line(x + 0.5, hi, x + 0.5, lo, c);
  add(root, 'rect', { x: x - 1.5, y: top + 0.5, width: 4, height: Math.max(bot - top, 1), fill: '#404040', stroke: c });
});

// entry-to-exit links
const red = '#e64a22', blue = '#0c64b4';
[[107,447,275,422],[107,459,275,432],[105,488,327,447],[103,518,430,447],[133,528,477,447],[151,418,262,404],[215,392,262,387],[227,357,275,354],[599,144,830,202],[527,182,650,203]]
  .forEach(a => line(...a, red, '4 3'));
[[105,435,143,432],[127,472,151,413],[151,409,200,409],[159,435,200,409],[175,468,199,408],[199,403,223,353],[239,347,273,337],[247,367,273,340],[527,167,599,148],[543,183,599,148],[551,202,599,148],[615,150,703,158],[615,163,703,159],[623,190,703,158],[671,195,703,158],[807,182,839,137],[855,102,1265,203],[863,128,1250,202],[887,144,1230,203],[903,163,1210,203],[1447,219,1471,175]]
  .forEach(a => line(...a, blue, '4 3'));

// deals
const up = 'M0-6.500L6 0H3.500V5.500H-3.500V0H-6z', down = 'M0 6.500L6 0H3.500V-5.500H-3.500V0H-6z';
const deal = (d, fill) => ([x, y]) => add(root, 'path', { d, fill, stroke: '#fff', transform: `translate(${x + 0.5} ${y})` });
[[527,172],[543,187],[615,156],[615,169],[623,190],[807,182],[855,108],[863,133],[887,149],[903,168],[1447,217],[1479,150],[1487,212],[239,347],[247,367],[207,387],[151,415],[159,434],[127,472],[175,470]].forEach(deal(up, '#0c5cac'));
[[519,194],[527,177],[599,141],[599,136],[703,152],[839,135],[1471,166],[1471,192],[223,351],[215,386],[199,403],[151,412],[143,427]].forEach(deal(down, '#e64a22'));

// axes
add(root, 'path', { d: `M${axisX + 0.5} 95.500H103.500V529.500H${axisX + 0.5}z`, fill: 'none', stroke: '#fff' });
for (let p = 4770.4; p > 4746; p -= 2) {
  if (Math.abs(p - 4766.4) < 0.1) continue;
  line(axisX, yOf(p), axisX + 4, yOf(p), '#fff');
  add(root, 'text', { x: axisX + 6, y: yOf(p) + 4 }, p.toFixed(2));
}
add(root, 'rect', { x: axisX + 3, y: 171, width: 54, height: 14, fill: '#778899' });
add(root, 'text', { x: axisX + 6, y: 182.5, style: 'fill:#10101a' }, '4766.31');
for (let i = 0; i < 12; i++) {
  const x = 103 + i * 128, m = 345 + i * 16;
  line(x + 0.5, 530, x + 0.5, 534, '#fff');
  const hh = String(Math.floor(m / 60)).padStart(2, '0'), mm = String(m % 60).padStart(2, '0');
  add(root, 'text', { x, y: 545 }, i ? `10 Apr ${hh}:${mm}` : '10 Apr 2026');
}
```
